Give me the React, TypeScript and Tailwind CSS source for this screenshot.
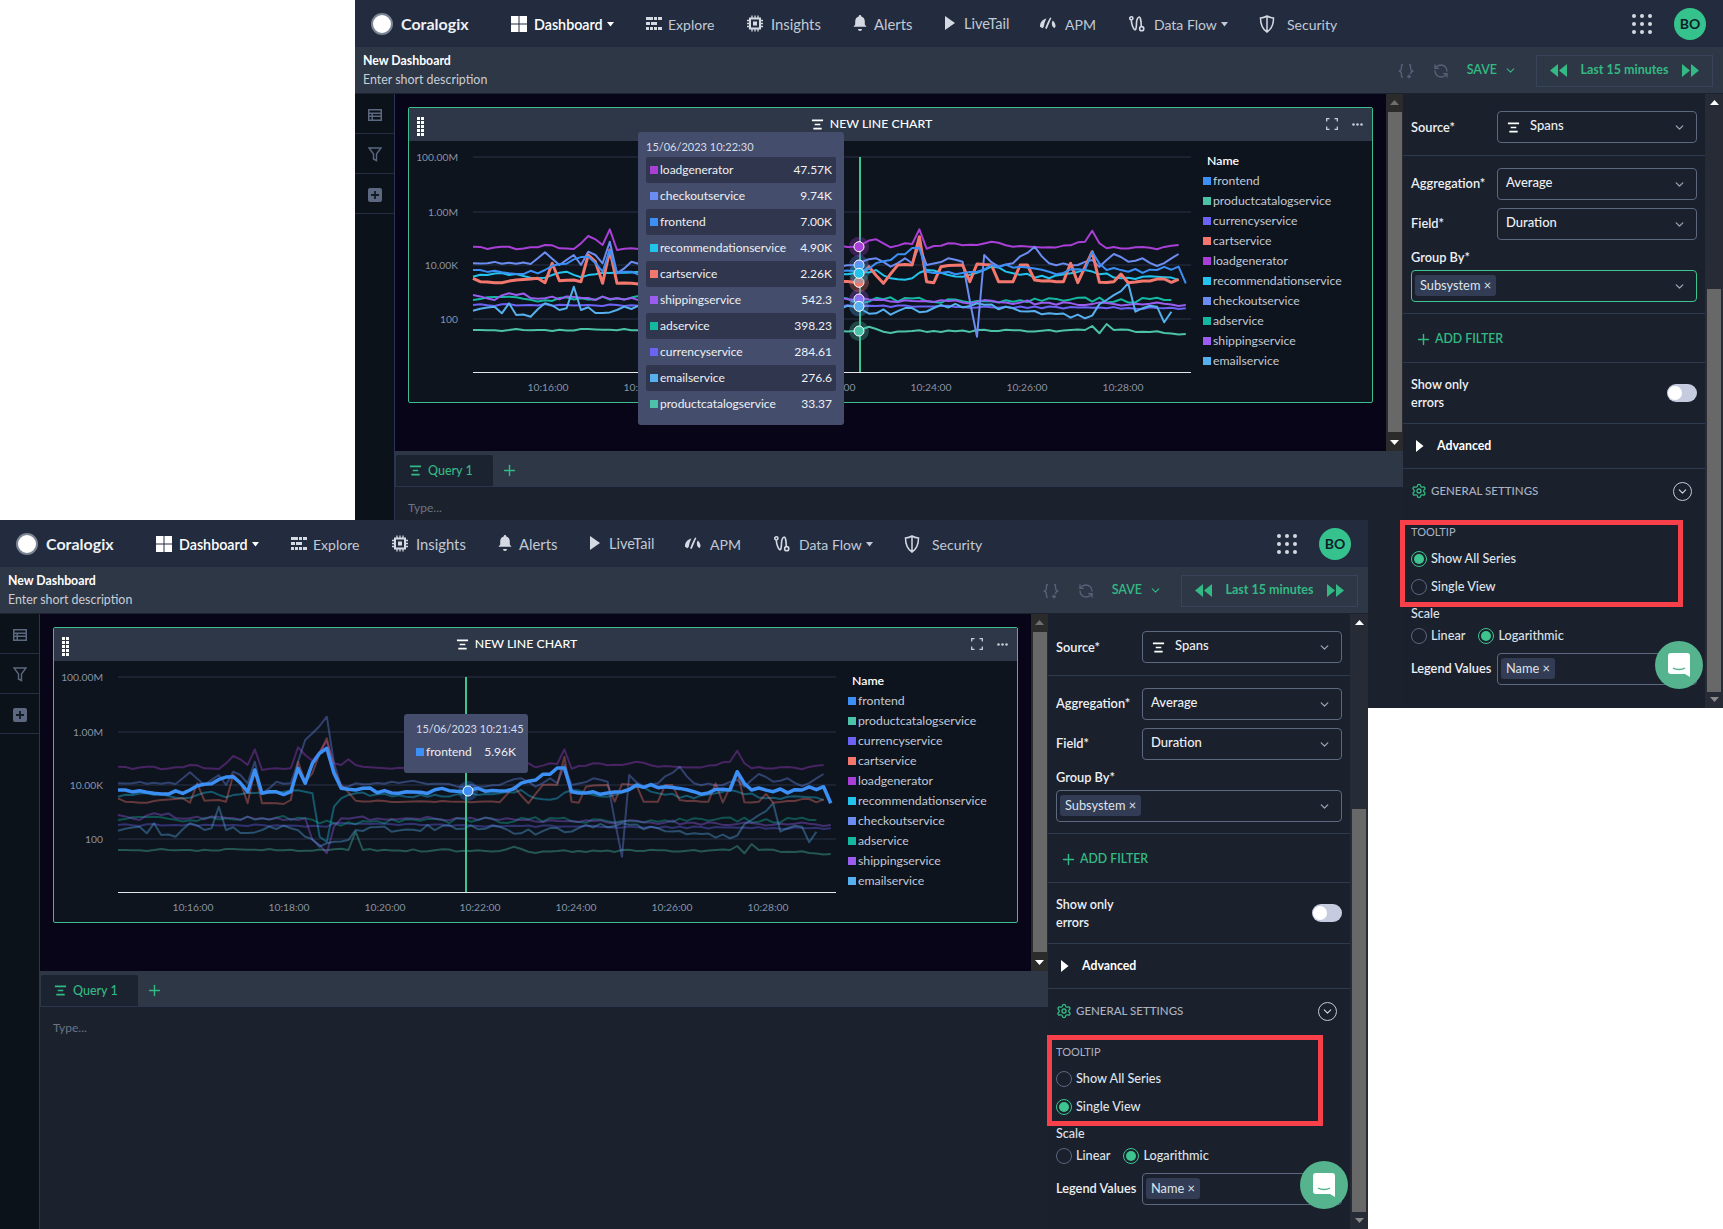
import React from "react";
import { ChevronDown, RefreshCcw, Settings, Plus } from "lucide-react";

type A = [number, number];
const mulberry = (a: number) => () => {
  a |= 0; a = (a + 0x6d2b79f5) | 0;
  let t = Math.imul(a ^ (a >>> 15), 1 | a);
  t = (t + Math.imul(t ^ (t >>> 7), 61 | t)) ^ t;
  return ((t ^ (t >>> 14)) >>> 0) / 4294967296;
};
const px = (i: number) => 118 + 7.2 * i;
const py = (v: number) => 130 + v / 3;
function build(anchors: A[], noise: number, seed: number, end = 99) {
  const r = mulberry(seed);
  const pts: string[] = [];
  let k = 0;
  for (let i = 0; i <= end; i++) {
    while (k < anchors.length - 2 && anchors[k + 1][0] <= i) k++;
    const [i0, v0] = anchors[k];
    const [i1, v1] = anchors[k + 1];
    const exact = anchors.find((a) => a[0] === i);
    const n = (r() - 0.5) * 2 * noise;
    const v = exact ? exact[1] : v0 + ((v1 - v0) * (i - i0)) / (i1 - i0) + n;
    pts.push(`${px(i).toFixed(1)},${py(v).toFixed(1)}`);
  }
  return pts.join(" ");
}

const C = {
  frontend: "#3b8ff5", product: "#4cc3a8", currency: "#6c63f5", cart: "#f4776d", load: "#a93fd6",
  rec: "#22c4ee", checkout: "#6b8cf0", ad: "#14b8a0", ship: "#9b5cf0", email: "#56b0ee",
};

const lines: { key: string; color: string; pts: string; w?: number }[] = [
  { key: "product", color: C.product, pts: build([[0,600],[32,600],[33,545],[34,600],[53,603],[55,590],[57,605],[85,600],[86,588],[87,610],[88,582],[89,600],[99,612]], 4, 11) },
  { key: "currency", color: C.currency, pts: build([[0,525],[20,525],[26,530],[29,530],[30,520],[50,528],[99,535]], 3, 12) },
  { key: "ad", color: C.ad, pts: build([[0,510],[26,505],[28,520],[30,520],[50,510],[97,510]], 9, 13, 97) },
  { key: "ship", color: C.ship, pts: build([[0,495],[3,510],[5,490],[10,505],[20,505],[26,505],[27,570],[29,610],[30,530],[31,505],[40,505],[99,525]], 6, 14) },
  { key: "email", color: C.email, pts: build([[0,542],[3,530],[4,550],[5,520],[6,555],[8,560],[10,520],[12,540],[13,535],[14,470],[15,540],[20,540],[24,535],[26,560],[28,590],[30,575],[32,570],[33,540],[53,530],[56,550],[70,520],[75,535],[80,550],[85,565],[91,460],[92,545],[95,530],[96,577],[97,545]], 10, 15, 97) },
  { key: "load", color: C.load, pts: build([[0,350],[2,357],[4,350],[6,358],[8,352],[10,345],[12,355],[14,357],[16,318],[17,328],[18,345],[19,298],[20,360],[22,355],[24,355],[25,292],[26,315],[27,332],[28,305],[29,275],[30,340],[31,345],[32,328],[33,345],[35,352],[40,355],[45,352],[50,348],[53,350],[56,328],[58,352],[60,340],[61,342],[62,298],[63,356],[66,340],[70,345],[72,335],[75,350],[80,352],[85,335],[86,302],[87,340],[88,355],[92,352],[95,358],[98,345]], 4, 16, 98) },
  { key: "rec", color: C.rec, pts: build([[0,440],[2,435],[6,432],[8,443],[10,443],[13,425],[15,442],[18,428],[26,425],[27,430],[28,560],[29,575],[30,470],[31,445],[33,430],[40,440],[53,430],[56,420],[58,445],[61,445],[63,420],[66,435],[68,440],[72,410],[75,430],[80,445],[85,420],[90,445],[95,440],[98,450]], 5, 17, 98) },
  { key: "checkout", color: C.checkout, pts: build([[0,400],[5,398],[8,402],[10,367],[12,405],[14,375],[15,405],[16,365],[17,375],[18,400],[19,335],[20,430],[22,395],[24,400],[26,270],[27,250],[29,200],[30,340],[31,410],[33,400],[40,395],[50,410],[53,405],[56,385],[58,410],[60,385],[61,400],[62,345],[63,405],[66,385],[68,395],[70,620],[71,375],[73,410],[75,400],[78,350],[80,400],[84,405],[86,390],[87,410],[89,372],[91,395],[93,385],[95,408],[97,385],[98,372]], 5, 18, 98) },
  { key: "cart", color: C.cart, w: 3, pts: build([[0,445],[1,455],[4,458],[6,450],[9,445],[10,458],[11,400],[12,452],[14,450],[15,455],[16,375],[17,395],[18,460],[19,360],[20,460],[23,462],[24,450],[25,335],[26,395],[27,370],[28,310],[29,265],[30,360],[31,405],[33,452],[40,455],[50,455],[53,457],[55,410],[57,460],[59,405],[61,405],[62,320],[63,455],[64,458],[65,410],[68,405],[69,455],[70,402],[72,405],[73,455],[75,455],[76,405],[77,405],[78,450],[82,455],[83,400],[84,458],[86,365],[87,457],[89,455],[90,432],[91,458],[96,447],[97,457],[98,448]], 2, 19, 98) },
  { key: "frontend", color: C.frontend, pts: build([[0,420],[5,430],[10,420],[16,380],[18,425],[19,360],[20,430],[24,425],[25,355],[26,400],[27,340],[28,310],[29,295],[30,370],[31,415],[33,420],[40,425],[53,423],[62,354],[63,425],[70,425],[72,405],[80,425],[85,420],[86,365],[88,420],[95,420],[98,410],[99,460]], 9, 20) },
];

const legend: [string, string][] = [
  ["frontend", C.frontend], ["productcatalogservice", C.product], ["currencyservice", C.currency], ["cartservice", C.cart],
  ["loadgenerator", C.load], ["recommendationservice", C.rec], ["checkoutservice", C.checkout], ["adservice", C.ad],
  ["shippingservice", C.ship], ["emailservice", C.email],
];
const allRows: [string, string, string][] = [
  ["loadgenerator", "47.57K", C.load], ["checkoutservice", "9.74K", C.checkout], ["frontend", "7.00K", C.frontend],
  ["recommendationservice", "4.90K", C.rec], ["cartservice", "2.26K", C.cart], ["shippingservice", "542.3", C.ship],
  ["adservice", "398.23", C.ad], ["currencyservice", "284.61", C.currency], ["emailservice", "276.6", C.email],
  ["productcatalogservice", "33.37", C.product],
];

const Lines3 = ({ c = "#fff", s = 14 }: { c?: string; s?: number }) => (
  <svg width={s} height={s} viewBox="0 0 14 14" fill="none" stroke={c} strokeWidth="1.8">
    <path d="M1 2.500h12M4 7h6M2.500 11.500h9" />
  </svg>
);
const Caret = ({ c }: { c: string }) => (
  <svg width="7" height="5" viewBox="0 0 7 5" className="ml-1 mt-[2px]"><path d="M0 0h7L3.500 4.500z" fill={c} /></svg>
);

function NavItem({ icon, label, w, caret, active, text = "ml-[8px] text-[14px] mt-[1px]" }: { icon: React.ReactNode; label: string; w: string; caret?: boolean; active?: boolean; text?: string }) {
  return (
    <div className={`flex items-center ${w}`}>
      <span className="flex w-[16px] justify-center">{icon}</span>
      <span className={`${text} ${active ? "font-semibold text-white" : "text-[#c3c9d6]"}`}>{label}</span>
      {caret && <Caret c={active ? "#fff" : "#c3c9d6"} />}
    </div>
  );
}

function Header() {
  const g = "#d5d9e2";
  return (
    <div className="flex h-[47px] shrink-0 items-center bg-[#222c3e]">
      <div className="flex w-[156px] items-center pl-[16px]">
        <span className="h-[22px] w-[22px] rounded-full border-[2px] border-[#7d8595] bg-white" />
        <span className="ml-[8px] text-[16px] font-bold text-[#eef0f4]">Coralogix</span>
      </div>
      <NavItem w="w-[135px]" active caret label="Dashboard" text="ml-[7px] mt-[3px] text-[14.300px]" icon={
        <svg width="16" height="16" viewBox="0 0 16 16" fill="#fff"><rect width="7.500" height="7.500" /><rect x="8.500" width="7.500" height="7.500" /><rect y="8.500" width="7.500" height="7.500" /><rect x="8.500" y="8.500" width="7.500" height="7.500" /></svg>
      } />
      <NavItem w="w-[101px]" label="Explore" text="ml-[6px] mt-[1px] text-[14px]" icon={
        <svg width="16" height="16" viewBox="0 0 16 16" fill={g}><path d="M0 1h7v3H0zM8 1h3v3H8zM12 1h4v3h-4zM0 6h4v3H0zM5 6h6v3H5zM0 11h3v3H0zM4 11h3v3H4zM8 11h3v3H8zM12 11h4v3h-4z" /></svg>
      } />
      <NavItem w="w-[105px]" label="Insights" text="ml-[8px] mt-[1px] text-[14.800px]" icon={
        <svg width="17" height="17" viewBox="0 0 16 16" fill="none" stroke={g}><rect x="3" y="3" width="10" height="10" strokeWidth="2" /><rect x="6" y="6" width="4" height="4" fill={g} stroke="none" /><path strokeWidth="1.300" d="M5 0v3M8 0v3M11 0v3M5 13v3M8 13v3M11 13v3M0 5h3M0 8h3M0 11h3M13 5h3M13 8h3M13 11h3" /></svg>
      } />
      <NavItem w="w-[92px]" label="Alerts" text="ml-[6px] mt-[2px] text-[14.800px]" icon={
        <svg width="16" height="17" viewBox="0 0 16 17" fill={g}><path d="M8 0a1.300 1.300 0 0 1 1.300 1.400c2.400.6 3.500 2.500 3.500 5v3l1.700 2.400H1.500l1.700-2.400v-3c0-2.500 1.100-4.400 3.500-5A1.300 1.300 0 0 1 8 0zM6 14h4a2 2 0 0 1-4 0z" /></svg>
      } />
      <NavItem w="w-[96px]" label="LiveTail" text="ml-[4px] mt-[1px] text-[14.600px]" icon={
        <svg width="12" height="16" viewBox="0 0 12 16" fill={g} className="-ml-[5px]"><path d="M1 1l10 7-10 7z" /></svg>
      } />
      <NavItem w="w-[89px]" label="APM" text="ml-[9px] mt-[2px] text-[14px]" icon={
        <svg width="19" height="15" viewBox="0 0 19 14" fill={g}><path d="M0 10C0 6 2.500 2.500 7.500 1L5.500 6 4.500 11l-1.500 1.500L0 11zM6 12.500l3-7L12 0l1.500.5-2.500 6L8 13.500zM14 6.500l1-3c2 1.500 3.500 4 3.500 7l-1.500 2-2.500-2.500z" /></svg>
      } />
      <NavItem w="w-[130px]" caret label="Data Flow" text="ml-[9px] mt-[1px] text-[14px]" icon={
        <svg width="18" height="18" viewBox="0 0 17 17" fill="none" stroke={g} strokeWidth="1.700"><circle cx="2.500" cy="2.500" r="1.700" /><circle cx="13.500" cy="13.500" r="2.200" /><path d="M2.500 4.500c0 4 2 9 3.500 10S8 11 8 7s2-6 3-6 2 5 2 10" /></svg>
      } />
      <NavItem w="w-[100px]" label="Security" text="ml-[12px] mt-[1px] text-[14px]" icon={
        <svg width="16" height="18" viewBox="0 0 16 18" fill="none" stroke={g} strokeWidth="1.500"><path d="M8 1c2 1.200 4 1.800 6.500 2 0 6-1 10.500-6.500 14C2.500 13.500 1.500 9 1.500 3 4 2.800 6 2.200 8 1zM8 1v16" /></svg>
      } />
      <div className="ml-auto flex items-center">
        <div className="grid grid-cols-3 gap-[4px]">
          {Array.from({ length: 9 }).map((_, i) => (
            <span key={i} className="h-[4px] w-[4px] rounded-full bg-[#d5d9e2]" />
          ))}
        </div>
        <span className="ml-[22px] mr-[17px] flex h-[32px] w-[32px] items-center justify-center rounded-full bg-[#35c28c] text-[14px] font-bold text-[#10202a]">BO</span>
      </div>
    </div>
  );
}

function SubHeader() {
  return (
    <div className="flex h-[47px] shrink-0 items-center border-b border-[#1c2230] bg-[#2e3746] pl-[8px]">
      <div className="flex flex-col gap-[3px] leading-[16px]">
        <span className="text-[12.300px] font-bold text-white">New Dashboard</span>
        <span className="text-[12.400px] text-[#c8cdd6]">Enter short description</span>
      </div>
      <div className="ml-auto mt-[1px] flex items-center pr-[10px]">
        <svg width="16" height="16" viewBox="0 0 16 16" fill="none" stroke="#56627a" strokeWidth="1.400"><path d="M5 1.500C3 1.500 3.500 3 3.500 5S2.500 7.500 1.500 8c1 .5 2 1 2 3s-.5 3.500 1.500 3.500M11 1.500c2 0 1.500 1.500 1.500 3.500s1 2.500 2 3c-1 .5-2 1-2 3" /><path d="M11 11.500v4M9 13.500h4" /></svg>
        <RefreshCcw size={16} color="#56627a" className="ml-[19px]" />
        <span className="ml-[18px] text-[12.500px] font-semibold text-[#33b983]">SAVE</span>
        <ChevronDown size={13} color="#33b983" className="ml-[7px]" />
        <div className="ml-[19px] flex h-[32px] w-[177px] items-center justify-between border border-[#384459] px-[13px]">
          <svg width="17" height="13" viewBox="0 0 17 13" fill="#33b983"><path d="M8 0v13L0 6.500zM17 0v13L9 6.500z" /></svg>
          <span className="text-[12.500px] font-bold text-[#33b983]">Last 15 minutes</span>
          <svg width="17" height="13" viewBox="0 0 17 13" fill="#33b983"><path d="M0 0v13l8-6.500zM9 0v13l8-6.500z" /></svg>
        </div>
      </div>
    </div>
  );
}

function Sidebar() {
  const cell = "flex h-[40px] items-center justify-center border-b border-[#242e42] pt-[2px]";
  return (
    <div className="flex w-[40px] shrink-0 flex-col border-r border-[#2b3550] bg-[#0c1219]">
      <div className={cell}>
        <svg width="14" height="12" viewBox="0 0 14 12" fill="#5b6880"><path d="M0 0h14v12H0zM1.500 1.500v2h11v-2zM1.500 5v1.500h2V5zm3.500 0v1.500h7.500V5zM1.500 8v2.500h2V8zM5 8v2.500h7.500V8z" fillRule="evenodd" /></svg>
      </div>
      <div className={cell}>
        <svg width="14" height="15" viewBox="0 0 14 15" fill="none" stroke="#5b6880" strokeWidth="1.400"><path d="M1 1h12L8.500 7v6.500L5.500 12V7z" /></svg>
      </div>
      <div className={cell}>
        <svg width="14" height="14" viewBox="0 0 14 14"><rect width="14" height="14" rx="2" fill="#5b6880" /><path d="M7 3v8M3 7h8" stroke="#141a24" strokeWidth="1.800" /></svg>
      </div>
    </div>
  );
}

function ScrollV({ wclass, thumbTop, thumbH, track, up, down }: { wclass: string; thumbTop: string; thumbH: string; track: string; up: string; down: string }) {
  return (
    <div className={`flex shrink-0 flex-col items-center ${wclass} ${track}`}>
      <svg width="9" height="5" viewBox="0 0 9 5" className="mt-[6px]"><path d="M0 5h9L4.500 0z" fill={up} /></svg>
      <div className={`mx-auto w-[14px] bg-[#686868] ${thumbTop} ${thumbH}`} />
      <svg width="9" height="5" viewBox="0 0 9 5" className="mb-[6px] mt-auto"><path d="M0 0h9L4.500 5z" fill={down} /></svg>
    </div>
  );
}

function Chart({ single }: { single: boolean }) {
  const order = lines;
  return (
    <svg width="788" height="261" viewBox="54 141 788 261" className="shrink-0">
      {[157, 212, 265, 319].map((y) => (
        <line key={y} x1="118" x2="836" y1={y} y2={y} stroke="#2a3346" strokeWidth="1" />
      ))}
      <line x1="118" x2="836" y1="372.500" y2="372.500" stroke="#e5e7eb" strokeWidth="1" />
      {[["100.00M", 157], ["1.00M", 212], ["10.00K", 265], ["100", 319]].map(([t, y]) => (
        <text key={t as string} x="103" y={(y as number) + 4} textAnchor="end" fontSize="10.300" fill="#8a93a5">{t}</text>
      ))}
      {[["10:16:00", 193], ["10:18:00", 289], ["10:20:00", 385], ["10:22:00", 480], ["10:24:00", 576], ["10:26:00", 672], ["10:28:00", 768]].map(([t, x]) => (
        <text key={t as string} x={x as number} y="391" textAnchor="middle" fontSize="10.300" fill="#8a93a5">{t}</text>
      ))}
      {!single &&
        order.map((l) => (
          <polyline key={l.key} points={l.pts} fill="none" stroke={l.color} strokeWidth={l.w ?? 2} strokeLinejoin="round" />
        ))}
      {single &&
        order.filter((l) => l.key !== "frontend").map((l) => (
          <polyline key={l.key} points={l.pts} fill="none" stroke={l.color} strokeWidth="2" strokeLinejoin="round" opacity="0.38" />
        ))}
      <line x1={single ? 466 : 505} x2={single ? 466 : 505} y1="157" y2="372" stroke="#3dc48f" strokeWidth="2" />
      {single && order.filter((l) => l.key === "frontend").map((l) => (
        <polyline key={l.key} points={l.pts} fill="none" stroke={l.color} strokeWidth="3.500" strokeLinejoin="round" />
      ))}
      {single && (
        <>
          <circle cx="468" cy="271" r="10" fill={C.frontend} opacity="0.3" />
          <circle cx="468" cy="271" r="5" fill={C.frontend} stroke="#fff" strokeWidth="1" />
        </>
      )}
      {!single &&
        ([[350, C.load], [603, C.product], [507, C.ship], [457, C.cart], [405, C.checkout], [430, C.rec], [529, C.email]] as [number, string][]).map(([v, c]) => (
          <g key={c}>
            <circle cx="504" cy={py(v)} r="10" fill={c} opacity="0.3" />
            <circle cx="504" cy={py(v)} r="5" fill={c} stroke="#fff" strokeWidth="1" />
          </g>
        ))}
    </svg>
  );
}

function Card({ single }: { single: boolean }) {
  return (
    <div className="ml-[13px] mt-[13px] flex h-[296px] w-[965px] shrink-0 flex-col rounded-[2px] border border-[#3dbd8e] bg-[#0d141e]">
      <div className="relative flex h-[33px] shrink-0 items-center justify-center bg-[#2d3747] pr-[38px]">
        <div className="absolute left-[8px] top-[9px] grid grid-cols-2 gap-[1.500px]">
          {Array.from({ length: 10 }).map((_, i) => (
            <span key={i} className="h-[2.500px] w-[2.500px] bg-white" />
          ))}
        </div>
        <Lines3 s={13} />
        <span className="ml-[6px] text-[12.300px] font-medium text-white">NEW LINE CHART</span>
        <div className="absolute right-[9px] top-[10px] flex items-center gap-[14px]">
          <svg width="12" height="12" viewBox="0 0 12 12" fill="none" stroke="#c8cdd6" strokeWidth="1.300"><path d="M0.700 3.500v-2.800h2.800M8.500 .7h2.800v2.800M11.300 8.500v2.800H8.500M3.500 11.300H.7V8.500" /></svg>
          <svg width="11" height="3" viewBox="0 0 11 3" fill="#c8cdd6"><circle cx="1.500" cy="1.500" r="1.300" /><circle cx="5.500" cy="1.500" r="1.300" /><circle cx="9.500" cy="1.500" r="1.300" /></svg>
        </div>
      </div>
      <div className="flex flex-1">
        <Chart single={single} />
        <div className="flex flex-col pt-[10px] text-[12.250px] leading-[20px]">
          <span className="ml-[10px] font-semibold text-white">Name</span>
          {legend.map(([n, c]) => (
            <div key={n} className="flex items-center text-[#c3c9d6]">
              <span className="mr-[2px] ml-[6px] h-[8px] w-[8px]" style={{ background: c }} />
              <span>{n}</span>
            </div>
          ))}
        </div>
      </div>
    </div>
  );
}

function Select({ text, chip, border = "border-[#5b6880]", icon, w = "w-[200px]" }: { text?: string; chip?: string; border?: string; icon?: boolean; w?: string }) {
  return (
    <div className={`flex h-[32px] items-center rounded-[4px] border pl-[8px] pr-[10px] ${border} ${w}`}>
      {icon && <span className="mr-[10px] ml-[1px] flex"><Lines3 s={13} /></span>}
      {text && <span className="-mt-[2px] text-[13px] font-medium text-[#eef0f4]">{text}</span>}
      {chip && (
        <span className="-ml-[5px] -mt-[1px] rounded-[3px] bg-[#323c55] px-[5px] py-[1px] text-[12.800px] text-[#dfe3ea]">{chip} ×</span>
      )}
      <ChevronDown size={13} color="#9aa3b5" strokeWidth={2.500} className="ml-auto" />
    </div>
  );
}

function Radio({ label, on }: { label: string; on?: boolean }) {
  return (
    <div className="flex items-center">
      <span className={`flex h-[16px] w-[16px] items-center justify-center rounded-full border ${on ? "border-[#3dc48f]" : "border-[#5b6880]"}`}>
        {on && <span className="h-[10px] w-[10px] rounded-full bg-[#3dc48f]" />}
      </span>
      <span className="ml-[4px] text-[12.700px] font-medium text-[#dfe3ea]">{label}</span>
    </div>
  );
}

function Panel({ single }: { single: boolean }) {
  const line = "border-b border-[#2e3a50]";
  const label = "w-[86px] text-[12.800px] font-semibold text-[#eef0f4]";
  return (
    <div className="flex w-[302px] shrink-0 flex-col bg-[#1a202c]">
      <div className={`flex h-[62px] items-start px-[8px] pt-[17px] ${line}`}>
        <span className={`${label} mt-[7px]`}>Source*</span>
        <Select text="Spans" icon />
      </div>
      <div className={`flex h-[158px] flex-col px-[8px] pt-[12px] ${line}`}>
        <div className="flex items-center"><span className={label}>Aggregation*</span><Select text="Average" /></div>
        <div className="mt-[8px] flex items-center"><span className={label}>Field*</span><Select text="Duration" /></div>
        <span className={`${label} mt-[9px] h-[21px] leading-[16px]`}>Group By*</span>
        <Select chip="Subsystem" w="w-[286px]" border={single ? "border-[#5b6880]" : "border-[#3dc48f]"} />
      </div>
      <div className={`flex h-[49px] items-center pl-[12px] pt-[2px] text-[12.300px] font-semibold text-[#33b983] ${line}`}>
        <Plus size={17} strokeWidth={2} className="mr-[3px]" />ADD FILTER
      </div>
      <div className={`flex h-[61px] items-center justify-between pl-[8px] pr-[8px] ${line}`}>
        <span className="mt-[2px] w-[60px] text-[12.600px] font-semibold leading-[18px] text-[#eef0f4]">Show only errors</span>
        <span className="flex h-[18px] w-[30px] items-center rounded-full bg-[#c5cce0] pl-[1px]">
          <span className="h-[14px] w-[14px] rounded-full bg-white" />
        </span>
      </div>
      <div className={`flex h-[45px] items-center ${line}`}>
        <svg width="8" height="12" viewBox="0 0 8 12" className="ml-[13px]" fill="#fff"><path d="M0 0l7.500 6L0 12z" /></svg>
        <span className="ml-[13px] text-[12.300px] font-bold text-white">Advanced</span>
      </div>
      <div className="flex h-[41px] items-center pl-[8px] pr-[13px] pt-[2px]">
        <Settings size={16} color="#33b983" strokeWidth={2} />
        <span className="ml-[4px] text-[11.500px] font-medium text-[#aab2c2]">GENERAL SETTINGS</span>
        <span className="ml-auto mt-[1px] flex h-[19px] w-[19px] items-center justify-center rounded-full border border-[#c3c9d6]">
          <ChevronDown size={13} color="#d5d9e2" />
        </span>
      </div>
      <div className="mt-[11px] flex flex-col px-[8px]">
        <span className="h-[24px] text-[11px] leading-[22px] text-[#aab2c2]">TOOLTIP</span>
        <div className="flex h-[28px] items-center"><Radio label="Show All Series" on={!single} /></div>
        <div className="flex h-[28px] items-center"><Radio label="Single View" on={single} /></div>
        <span className="h-[26px] text-[12.500px] font-medium leading-[26px] text-[#dfe3ea]">Scale</span>
        <div className="flex h-[18px] items-center gap-[13px]"><Radio label="Linear" /><Radio label="Logarithmic" on /></div>
        <div className="mt-[8px] flex items-center">
          <span className={`${label} whitespace-nowrap`}>Legend Values</span>
          <Select chip="Name" />
        </div>
      </div>
    </div>
  );
}

function Tip({ single }: { single: boolean }) {
  if (single)
    return (
      <div className="absolute left-[404px] top-[194px] flex h-[59px] w-[124px] flex-col whitespace-nowrap rounded-[3px] bg-[#444e6c] px-[12px] text-[12px]">
        <span className="mt-[7px] text-center text-[11px] leading-[16px] text-[#d8dce6]">15/06/2023 10:21:45</span>
        <div className="mt-[7px] flex items-center leading-[16px] text-[#eef0f4]">
          <span className="mr-[2px] h-[8px] w-[8px]" style={{ background: C.frontend }} />
          frontend<span className="ml-auto">5.96K</span>
        </div>
      </div>
    );
  return (
    <div className="absolute left-[283px] top-[132px] flex h-[293px] w-[206px] flex-col rounded-[3px] bg-[#444e6c] px-[8px] text-[12px]">
      <span className="h-[25px] text-[11px] leading-[30px] text-[#d8dce6]">15/06/2023 10:22:30</span>
      {allRows.map(([n, v, c], i) => (
        <div key={n} className={`flex h-[26px] items-center rounded-[2px] pl-[4px] pr-[4px] text-[#eef0f4] ${i % 2 === 0 ? "bg-[#2f364d]" : ""}`}>
          <span className="mr-[2px] h-[8px] w-[8px]" style={{ background: c }} />
          {n}<span className="ml-auto">{v}</span>
        </div>
      ))}
    </div>
  );
}

function Chat({ boxClass }: { boxClass: string }) {
  return (
    <>
      <div className={`absolute border-[5px] border-[#f8404a] ${boxClass}`} />
      <div className="absolute left-[1300px] top-[641px] flex h-[48px] w-[48px] items-center justify-center rounded-full bg-[#55b38e]">
        <svg width="22" height="24" viewBox="0 0 22 24"><path d="M3 0h16a3 3 0 0 1 3 3v21l-5-3H3a3 3 0 0 1-3-3V3a3 3 0 0 1 3-3z" fill="#fff" /><path d="M5 15c3 2 9 2 12 0" fill="none" stroke="#55b38e" strokeWidth="1.500" /></svg>
      </div>
    </>
  );
}

function AppWindow({ single, pos, h, box }: { single: boolean; pos: string; h: string; box: string }) {
  return (
    <div className={`absolute flex w-[1368px] flex-col overflow-hidden ${pos} ${h}`}>
      <Header />
      <SubHeader />
      <div className="flex min-h-0 flex-1">
        <Sidebar />
        <div className="flex w-[1008px] shrink-0 flex-col">
          <div className="flex h-[357px] shrink-0 justify-between bg-[#080519]">
            <Card single={single} />
            <ScrollV wclass="w-[17px]" track="bg-[#2b2b2b]" up="#6f6f6f" down="#fff" thumbTop="mt-[7px]" thumbH="h-[320px]" />
          </div>
          <div className="flex h-[36px] shrink-0 items-end border-b border-[#2b3550] bg-[#2e3746]">
            <div className="ml-[1px] flex h-[31px] w-[97px] items-center rounded-t-[2px] bg-[#1c2330] pl-[13px]">
              <Lines3 c="#33b983" s={13} />
              <span className="ml-[6px] mt-[1px] text-[12.500px] font-medium text-[#33b983]">Query 1</span>
            </div>
            <Plus size={17} color="#33b983" strokeWidth={2} className="mb-[7px] ml-[8px]" />
          </div>
          <div className="flex-1 bg-[#1b222e] pl-[13px] pt-[12px] text-[12px] text-[#6c7484]">Type...</div>
        </div>
        <Panel single={single} />
        <ScrollV wclass="w-[18px]" track="bg-[#262b35]" up="#fff" down="#8a8a8a" thumbTop="mt-[184px]" thumbH="h-[403px]" />
      </div>
      {!single && <Tip single={false} />}
      {single && <Tip single />}
      <Chat boxClass={box} />
    </div>
  );
}

export default function App() {
  return (
    <div className="relative h-[1229px] w-[1723px] overflow-hidden bg-white font-['Lato',sans-serif]">
      <AppWindow single={false} pos="left-[355px] top-0" h="h-[708px]" box="left-[1045px] top-[520px] h-[87px] w-[283px]" />
      <AppWindow single pos="left-0 top-[520px]" h="h-[709px]" box="left-[1047px] top-[515px] h-[91px] w-[276px]" />
    </div>
  );
}
